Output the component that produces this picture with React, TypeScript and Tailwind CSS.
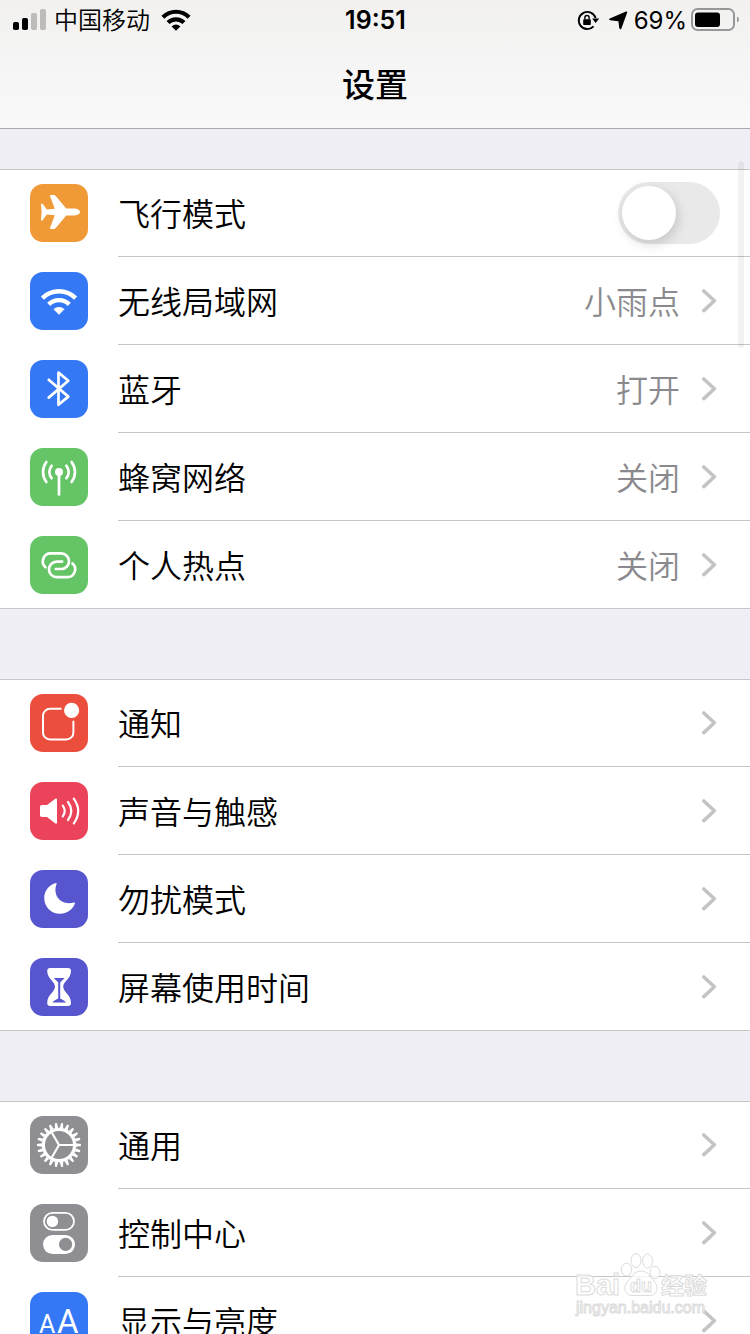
import React, { useState } from 'react';

type IconName =
    | 'airplane'
    | 'wifi'
    | 'bluetooth'
    | 'cellular'
    | 'hotspot'
    | 'notifications'
    | 'sound'
    | 'moon'
    | 'hourglass'
    | 'gear'
    | 'switches'
    | 'display';

interface SettingItem {
    icon: IconName;
    color: string;
    label: string;
    value?: string;
    toggle?: boolean;
}

const groups: SettingItem[][] = [
    [
        { icon: 'airplane', color: 'bg-[#f09a37]', label: '飞行模式', toggle: true },
        { icon: 'wifi', color: 'bg-[#3478f6]', label: '无线局域网', value: '小雨点' },
        { icon: 'bluetooth', color: 'bg-[#3478f6]', label: '蓝牙', value: '打开' },
        { icon: 'cellular', color: 'bg-[#65c466]', label: '蜂窝网络', value: '关闭' },
        { icon: 'hotspot', color: 'bg-[#65c466]', label: '个人热点', value: '关闭' },
    ],
    [
        { icon: 'notifications', color: 'bg-[#eb4e3d]', label: '通知' },
        { icon: 'sound', color: 'bg-[#eb445a]', label: '声音与触感' },
        { icon: 'moon', color: 'bg-[#5756ce]', label: '勿扰模式' },
        { icon: 'hourglass', color: 'bg-[#5756ce]', label: '屏幕使用时间' },
    ],
    [
        { icon: 'gear', color: 'bg-[#8e8e93]', label: '通用' },
        { icon: 'switches', color: 'bg-[#8e8e93]', label: '控制中心' },
        { icon: 'display', color: 'bg-[#3478f6]', label: '显示与亮度' },
    ],
];

const gearTeeth = Array.from({ length: 22 }, (_, i) => (i * 360) / 22);

const glyphs: Record<IconName, React.ReactNode> = {
    airplane: (
        <path
            fill="#fff"
            d="M50 28C50 26 47 24.6 44 24.6H36.2L26 12.2C25.2 11.3 24.4 11 23.4 11H20.8C20.1 11 19.8 11.5 20.1 12.2L24.8 24.8 16.8 25.4 13 20.3C12.6 19.7 12 19.4 11.5 19.4 11.1 19.4 11 19.8 11 20.3L11.6 28 11 35.7C11 36.2 11.1 36.6 11.5 36.6 12 36.6 12.6 36.3 13 35.7L16.8 30.6 24.8 31.2 20.1 43.8C19.8 44.5 20.1 45 20.8 45H23.4C24.4 45 25.2 44.7 26 43.8L36.2 31.4H44C47 31.4 50 30 50 28Z"
        />
    ),
    wifi: (
        <>
            <g fill="none" stroke="#fff" strokeWidth="4.4">
                <path d="M12.4 26.1A23.5 23.5 0 0 1 45.6 26.1" />
                <path d="M18.7 32.4A14.5 14.5 0 0 1 39.3 32.4" />
            </g>
            <path fill="#fff" d="M23.5 37.2A8 8 0 0 1 34.5 37.2L29 42.7Z" />
        </>
    ),
    bluetooth: (
        <path
            fill="none"
            stroke="#fff"
            strokeWidth="2.7"
            strokeLinecap="round"
            strokeLinejoin="round"
            d="M18.7 19.8 38.3 36.6 28.5 44.8V12.5L38.3 20.8 18.7 37.6"
        />
    ),
    cellular: (
        <>
            <circle cx="29" cy="24" r="4" fill="#fff" />
            <g fill="none" stroke="#fff" strokeWidth="2.7" strokeLinecap="round">
                <path d="M29 24V46.5" />
                <path d="M21.6 17.8A9.6 9.6 0 0 0 21.6 30.2M36.4 17.8A9.6 9.6 0 0 1 36.4 30.2" />
                <path d="M16.4 14A16.6 16.6 0 0 0 16.4 34M41.6 14A16.6 16.6 0 0 1 41.6 34" />
            </g>
        </>
    ),
    hotspot: (
        <g fill="none" stroke="#fff" strokeWidth="2.7" strokeLinecap="round">
            <path d="M15.5 31.2A7.9 7.9 0 0 1 20.8 17.4H31.2A7.8 7.8 0 0 1 31.2 33H25.8" />
            <path d="M42.5 27.4A7.9 7.9 0 0 1 37.2 41.2H26.8A7.8 7.8 0 0 1 26.8 25.6H32.2" />
        </g>
    ),
    notifications: (
        <>
            <path
                fill="none"
                stroke="#fff"
                strokeWidth="2"
                d="M31.5 14.8H20A7 7 0 0 0 13 21.8V38.4A7 7 0 0 0 20 45.4H36.4A7 7 0 0 0 43.4 38.4V26.8"
            />
            <circle cx="41.6" cy="16.4" r="7.6" fill="#fff" />
        </>
    ),
    sound: (
        <>
            <path
                fill="#fff"
                d="M12 23H17L25 16.9C26 16.2 27 16.5 27 17.8V40.4C27 41.7 26 42 25 41.3L17 35H12C10.7 35 10 34.3 10 33V25C10 23.7 10.7 23 12 23Z"
            />
            <g fill="none" stroke="#fff" strokeWidth="2.2" strokeLinecap="round">
                <path d="M32.8 23.6Q36.6 29 32.8 34.4" />
                <path d="M38 20Q44.6 29 38 38" />
                <path d="M43.8 16.6Q52.6 29 43.8 41.4" />
            </g>
        </>
    ),
    moon: (
        <path
            fill="#fff"
            d="M26 13.1C19.4 14.8 14.2 20.6 14.2 28.1A15.6 15.6 0 0 0 29.9 43.7C37 43.7 43 39.5 45 33.3 45.2 32.6 44.7 32.3 44.1 32.5 32 36 22 26.5 26.6 13.8 26.8 13.3 26.5 13 26 13.1Z"
        />
    ),
    hourglass: (
        <>
            <path
                fill="#fff"
                d="M20.2 10H38C40 10 41 11.2 41 13 41 20.5 33.2 23.5 33.2 28.5 33.2 34 41 36.5 41 45 41 46.8 40 48 38 48H20.2C18.2 48 17.2 46.8 17.2 45 17.2 36.5 25 34 25 28.5 25 23.5 17.2 20.5 17.2 13 17.2 11.2 18.2 10 20.2 10Z"
            />
            {/* sand: funnel, stream and pile */}
            <path
                fill="#5756ce"
                d="M23.8 20H34.6C33.8 21.4 31.4 22.6 30.2 24.4V40.6C32 41.8 35 42.6 36 44.6H22.4C23.4 42.6 26.4 41.8 28.2 40.6V24.4C27 22.6 24.6 21.4 23.8 20Z"
            />
        </>
    ),
    gear: (
        <>
            <circle cx="29" cy="29" r="15.6" fill="none" stroke="#fff" strokeWidth="3.2" />
            {gearTeeth.map((angle) => (
                <path key={angle} fill="#fff" d="M46 27.3 51 28V30L46 30.7Z" transform={`rotate(${angle} 29 29)`} />
            ))}
            <path fill="none" stroke="#fff" strokeWidth="2.2" d="M29 29H44M29 29 21.5 16M29 29 21.5 42" />
        </>
    ),
    switches: (
        <>
            <rect x="14" y="8.9" width="30" height="17" rx="8.5" fill="none" stroke="#fff" strokeWidth="1.8" />
            <circle cx="22.4" cy="17.4" r="5.7" fill="#fff" />
            <rect x="13" y="31" width="32" height="19" rx="9.5" fill="#fff" />
            <circle cx="35.6" cy="40.4" r="6.6" fill="#8e8e93" />
        </>
    ),
    display: (
        <g fill="#fff" fontFamily="Roboto, sans-serif" fontWeight="400">
            <text x="9" y="41" fontSize="25">
                A
            </text>
            <text x="27" y="41" fontSize="33">
                A
            </text>
        </g>
    ),
};

const TileIcon = ({ name, color }: { name: IconName; color: string }) => (
    <span className={`size-[58px] shrink-0 overflow-hidden rounded-[13px] ${color}`}>
        <svg viewBox="0 0 58 58" className="size-full" aria-hidden="true">
            {glyphs[name]}
        </svg>
    </span>
);

const Chevron = () => (
    <svg viewBox="0 0 20 26" className="h-[26px] w-5 shrink-0" aria-hidden="true">
        <path
            d="M3.8 3 14.4 12.8 3.8 22.6"
            fill="none"
            stroke="#c4c4c6"
            strokeWidth="3.6"
            strokeLinecap="round"
            strokeLinejoin="round"
        />
    </svg>
);

const SettingRow = ({ item, last }: { item: SettingItem; last: boolean }) => {
    const [checked, setChecked] = useState(false);
    const line = last ? '' : 'border-b border-[#c6c6c8]';
    const rowClass = 'flex h-22 items-center gap-[30px] pl-[30px]';
    const bodyClass = `flex h-full flex-1 items-center pr-[30px] ${line}`;

    if (item.toggle) {
        return (
            <label className={rowClass}>
                <TileIcon name={item.icon} color={item.color} />
                <span className={bodyClass}>
                    <span className="flex-1 pt-1">{item.label}</span>
                    <input
                        type="checkbox"
                        role="switch"
                        checked={checked}
                        onChange={(e) => setChecked(e.target.checked)}
                        className="h-[62px] w-[102px] appearance-none rounded-full bg-[#e9e9ea] p-1 before:block before:size-[54px] before:rounded-full before:bg-white before:shadow-[2px_4px_12px_rgba(0,0,0,0.16)] checked:bg-[#65c466] checked:before:translate-x-10"
                    />
                </span>
            </label>
        );
    }

    return (
        <a href="#" className={rowClass}>
            <TileIcon name={item.icon} color={item.color} />
            <span className={bodyClass}>
                <span className="flex-1 pt-1">{item.label}</span>
                {item.value && <span className="mr-5 pt-1 text-[#8a8a8e]">{item.value}</span>}
                <Chevron />
            </span>
        </a>
    );
};

const StatusBar = () => (
    <div className="grid h-10 grid-cols-[1fr_auto_1fr] items-center pr-[11px] pl-3 text-2xl">
        <div className="flex items-center gap-2">
            <svg viewBox="0 0 34 22" className="h-[22px] w-[34px]" aria-hidden="true">
                <rect x="1" y="13" width="6" height="8" rx="1.8" />
                <rect x="10" y="9" width="6" height="12" rx="1.8" />
                <rect x="19" y="4" width="6" height="17" rx="1.8" fill="#bdbcbb" />
                <rect x="28" y="0" width="6" height="21" rx="1.8" fill="#bdbcbb" />
            </svg>
            <span className="pt-0.5 font-[350]">中国移动</span>
            <svg viewBox="0 0 32 24" className="ml-0.5 h-6 w-8" aria-hidden="true">
                <g fill="none" stroke="#000" strokeWidth="4.2">
                    <path d="M2.9 9.2A18.5 18.5 0 0 1 29.1 9.2" />
                    <path d="M8 14.6A11.5 11.5 0 0 1 24 14.6" />
                </g>
                <path d="M11.6 18.4A6.2 6.2 0 0 1 20.4 18.4L16 22.8Z" />
            </svg>
        </div>
        <span className="pt-0.5 text-[25px] font-semibold">19:51</span>
        <div className="flex items-center justify-end gap-1">
            <svg viewBox="0 0 24 24" className="mr-1 size-6" aria-hidden="true">
                <path d="M17.6 18.4A8.6 8.6 0 1 1 19.6 10" fill="none" stroke="#000" strokeWidth="1.9" />
                <path d="M16.2 10.4H23.2L19.6 15Z" />
                <rect x="7.2" y="11.2" width="7.6" height="5.8" rx="0.8" />
                <path d="M8.9 11.6V9.6A2.1 2.1 0 0 1 13.1 9.6V11.6" fill="none" stroke="#000" strokeWidth="1.4" />
            </svg>
            <svg viewBox="0 0 20 20" className="mr-0.5 size-5" aria-hidden="true">
                <path d="M18 1.6Q19.8 1 19.1 2.8L13.4 18.4Q12.3 20.2 11.3 18.2L10.4 11.2 2.2 10.2Q0 9.4 1.8 8.4Z" />
            </svg>
            <span className="pt-0.5">69%</span>
            <svg viewBox="0 0 48 24" className="h-6 w-12" aria-hidden="true">
                <rect x="1" y="1" width="42" height="21" rx="5.5" fill="none" stroke="#979797" strokeWidth="2" />
                <rect x="4" y="4.5" width="25" height="14.5" rx="3" />
                <path d="M46 8.5Q48 9.4 48 11.5T46 14.5Z" fill="#979797" />
            </svg>
        </div>
    </div>
);

const Watermark = () => (
    <svg
        viewBox="0 0 150 72"
        className="pointer-events-none absolute right-[30px] bottom-3 h-[72px] w-[150px]"
        fill="#fff"
        fillOpacity="0.75"
        stroke="#dcdcdc"
        strokeWidth="1"
        fontFamily="'Liberation Sans', 'Noto Sans CJK SC', sans-serif"
        fontWeight="700"
    >
        <ellipse cx="56.5" cy="19.5" rx="5.2" ry="6.4" />
        <ellipse cx="66" cy="10.5" rx="5" ry="7" />
        <ellipse cx="77.5" cy="11" rx="5" ry="7" />
        <ellipse cx="85" cy="22.5" rx="5" ry="6.2" />
        <path d="M71 21C64 21 62 27 58 31 53 36 54 44 61 45.5H81C88 44 89 36 84 31 80 27 78 21 71 21Z" />
        <text x="5" y="45" fontSize="29">
            Bai
        </text>
        <text x="60" y="42" fontSize="18">
            du
        </text>
        <text x="91" y="44" fontSize="23">
            经验
        </text>
        <text x="6" y="63" fontSize="16" fontWeight="400">
            jingyan.baidu.com
        </text>
    </svg>
);

export default function App() {
    return (
        <div className="relative flex h-screen flex-col overflow-hidden bg-[#f0eff5] font-[Inter,'Noto_Sans_CJK_SC',sans-serif] text-black">
            <header className="shrink-0 border-b border-[#a9a8ae] bg-linear-to-b from-[#f2f1f0] to-[#f9f9f9]">
                <StatusBar />
                <h1 className="flex h-22 items-center justify-center pt-1 text-[33px] font-medium">设置</h1>
            </header>
            <main className="flex flex-1 flex-col gap-[70px] overflow-y-auto pt-10 text-[32px] font-[350] [scrollbar-width:none]">
                {groups.map((items, index) => (
                    <section
                        key={index}
                        className="bg-white shadow-[inset_0_1px_0_#c6c6c8,inset_0_-1px_0_#c6c6c8]"
                    >
                        {items.map((item, i) => (
                            <SettingRow key={item.label} item={item} last={i === items.length - 1} />
                        ))}
                    </section>
                ))}
            </main>
            <div className="absolute top-[161px] right-1.5 h-[187px] w-1.5 rounded-full bg-black/5" />
            <Watermark />
        </div>
    );
}
